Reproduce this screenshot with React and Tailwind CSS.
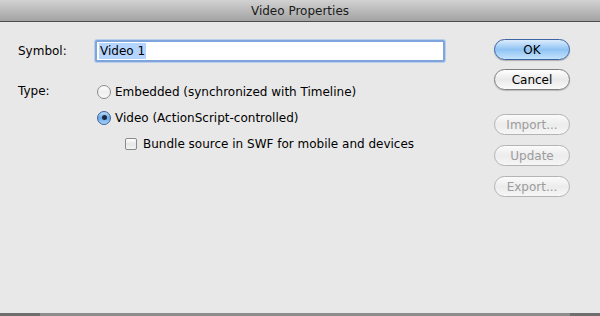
import React from 'react';

const FONT = { fontFamily: '"DejaVu Sans", "Noto Sans", sans-serif' };

function AquaButton({ children, primary, disabled }) {
  const base = 'h-[21px] w-[76px] rounded-full border flex items-center justify-center text-[12px] leading-none';
  if (primary)
    return (
      <div className={`${base} border-[#3f64a3] bg-gradient-to-b from-[#dcecfc] via-[#8fc3f3] to-[#c4e3fb] text-black shadow-[0_1px_1px_rgba(0,0,0,0.25)]`}>
        {children}
      </div>
    );
  if (disabled)
    return (
      <div className={`${base} border-[#b4b4b4] bg-gradient-to-b from-[#fbfbfb] via-[#ececec] to-[#f6f6f6] text-[#9c9c9c]`}>
        {children}
      </div>
    );
  return (
    <div className={`${base} border-[#7f7f7f] bg-gradient-to-b from-[#ffffff] via-[#e9e9e9] to-[#fafafa] text-black shadow-[0_1px_1px_rgba(0,0,0,0.2)]`}>
      {children}
    </div>
  );
}

function Radio({ checked }) {
  if (checked)
    return (
      <span className="w-[14px] h-[14px] rounded-full border border-[#3c5f98] bg-gradient-to-b from-[#b8d8f6] via-[#6aa8e8] to-[#a8d2f6] flex items-center justify-center">
        <span className="w-[5px] h-[5px] rounded-full bg-[#1b2a40]" />
      </span>
    );
  return <span className="w-[14px] h-[14px] rounded-full border border-[#8a8a8a] bg-gradient-to-b from-[#ffffff] via-[#eeeeee] to-[#fafafa]" />;
}

export default function App() {
  return (
    <div className="w-[600px] h-[316px] flex flex-col bg-[#e8e8e8] text-[12px] text-black overflow-hidden" style={FONT}>
      <div className="h-[22px] shrink-0 bg-gradient-to-b from-[#d2d2d2] to-[#a3a3a3] border-b border-[#4e4e4e] flex items-center justify-center text-[12px] text-[#1a1a1a]">
        Video Properties
      </div>
      <div className="flex-1 flex pt-[17px]">
        <div className="flex-1 flex flex-col pl-[18px]">
          <div className="flex items-center h-[23px]">
            <span className="w-[77px]">Symbol:</span>
            <div className="w-[350px] h-[22px] bg-white border-[2px] border-[#7fa5dc] rounded-[2px] shadow-[0_0_0_1px_#b9cfee] flex items-center px-[2px]">
              <span className="bg-[#b5d5ff] px-[1px] leading-[16px]">Video 1</span>
            </div>
          </div>
          <div className="flex mt-[21px]">
            <span className="w-[79px] leading-[17px]">Type:</span>
            <div className="flex flex-col gap-[9px]">
              <div className="flex items-center gap-[4px] h-[17px]">
                <Radio />
                <span>Embedded (synchronized with Timeline)</span>
              </div>
              <div className="flex items-center gap-[4px] h-[17px]">
                <Radio checked />
                <span>Video (ActionScript-controlled)</span>
              </div>
              <div className="flex items-center gap-[6px] h-[17px] pl-[28px]">
                <span className="w-[12px] h-[12px] rounded-[2px] border border-[#8a8a8a] bg-gradient-to-b from-[#ffffff] via-[#e6e6e6] to-[#f4f4f4]" />
                <span>Bundle source in SWF for mobile and devices</span>
              </div>
            </div>
          </div>
        </div>
        <div className="w-[106px] shrink-0 flex flex-col">
          <AquaButton primary>OK</AquaButton>
          <div className="mt-[9px]"><AquaButton>Cancel</AquaButton></div>
          <div className="mt-[24px]"><AquaButton disabled>Import...</AquaButton></div>
          <div className="mt-[10px]"><AquaButton disabled>Update</AquaButton></div>
          <div className="mt-[10px]"><AquaButton disabled>Export...</AquaButton></div>
        </div>
      </div>
      <div className="h-[3px] shrink-0 flex">
        <div className="w-[40px] bg-[#6e6e6e]" />
        <div className="flex-1 bg-[#8c8c8c]" />
        <div className="w-[30px] bg-[#6e6e6e]" />
      </div>
    </div>
  );
}
